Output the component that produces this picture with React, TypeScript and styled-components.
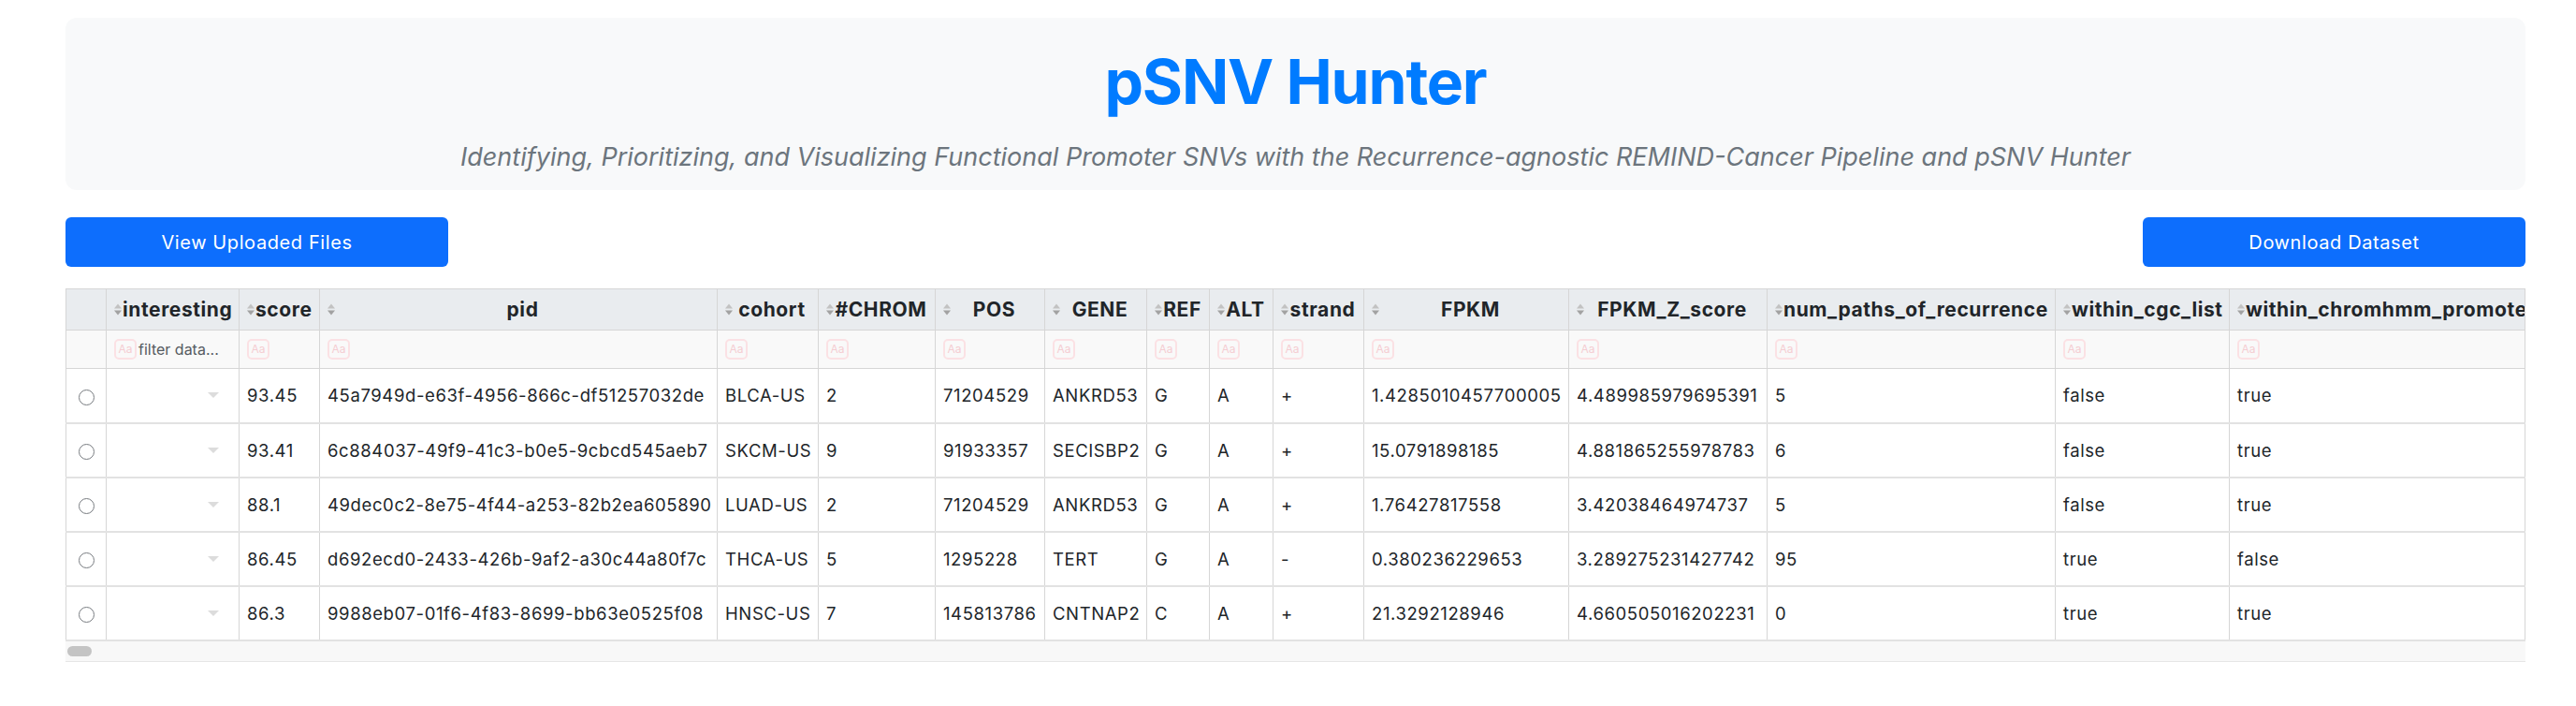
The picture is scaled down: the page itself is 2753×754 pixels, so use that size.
import React from "react";
import styled, { createGlobalStyle } from "styled-components";

const GlobalStyle = createGlobalStyle`
  html, body { margin: 0; padding: 0; background: #ffffff; }
  body { font-family: Inter, "Noto Sans", sans-serif; color: #212529; }
  * { box-sizing: border-box; }
`;

const Page = styled.div`
  padding: 19px 54px 40px 70px;
`;

const Hero = styled.header`
  background: #f8f9fa;
  border-radius: 12px;
  padding: 29px 24px 15px;
  text-align: center;
`;

const Title = styled.h1`
  margin: 0;
  font-size: 66px;
  line-height: 79px;
  font-weight: 700;
  letter-spacing: -1.2px;
  color: #007bff;
`;

const Subtitle = styled.p`
  margin: 21px 0 0;
  font-size: 27px;
  line-height: 40px;
  font-style: italic;
  color: #6c757d;
`;

const Actions = styled.div`
  display: flex;
  justify-content: space-between;
  margin-top: 29px;
`;

const Button = styled.button`
  width: 409px;
  height: 53px;
  border: 0;
  border-radius: 6px;
  background: #0d6efd;
  color: #ffffff;
  font-family: inherit;
  font-size: 20px;
  letter-spacing: 0.6px;
  font-weight: 400;
  cursor: pointer;
`;

const TableFrame = styled.div`
  margin-top: 23px;
  overflow: hidden;
`;

const Table = styled.table<{ $width: number }>`
  border-collapse: collapse;
  table-layout: fixed;
  width: ${(p) => p.$width}px;
`;

const HeadCell = styled.th`
  height: 44px;
  padding: 0 8px;
  background: #e9ecef;
  border: 1px solid #d6d6d6;
  font-weight: 700;
  font-size: 21px;
  letter-spacing: 0.6px;
  color: #212529;
  white-space: nowrap;
  overflow: hidden;
`;

const HeadInner = styled.div`
  display: flex;
  align-items: center;
`;

const HeadName = styled.span`
  flex: 1;
  text-align: center;
`;

const SortIcon = styled.svg`
  flex: none;
  width: 8px;
  height: 13px;
  margin-right: 1px;
`;

const FilterCell = styled.td`
  height: 41px;
  padding: 0 8px;
  background: #f9f9f9;
  border: 1px solid #d6d6d6;
  white-space: nowrap;
  overflow: hidden;
`;

const FilterInner = styled.div`
  display: flex;
  align-items: center;
  gap: 2px;
`;

const CaseBadge = styled.span`
  display: inline-flex;
  align-items: center;
  justify-content: center;
  width: 24px;
  height: 22px;
  border: 2px solid #fbe1e4;
  border-radius: 5px;
  font-size: 12px;
  color: #f5cdd2;
  line-height: 1;
`;

const Placeholder = styled.span`
  font-size: 16px;
  color: #555b61;
`;

const Row = styled.tr`
  height: 58px;
`;

const Cell = styled.td`
  padding: 0 8px;
  border: 1px solid #d6d6d6;
  border-bottom: 2px solid #e2e2e2;
  font-size: 18.5px;
  letter-spacing: 0.6px;
  color: #212529;
  white-space: nowrap;
  overflow: hidden;
  background: #ffffff;
`;

const CenterCell = styled(Cell)`
  text-align: center;
`;

const Radio = styled.span`
  display: inline-block;
  width: 17px;
  height: 17px;
  border: 1px solid #777b80;
  border-radius: 50%;
  background: #ffffff;
  vertical-align: middle;
`;

const DropdownCell = styled(Cell)`
  padding-right: 21px;
`;

const Caret = styled.div`
  display: flex;
  justify-content: flex-end;
  &::after {
    content: "";
    width: 0;
    height: 0;
    border-left: 6px solid transparent;
    border-right: 6px solid transparent;
    border-top: 6px solid #dcdcdc;
  }
`;

const ScrollTrack = styled.div`
  height: 22px;
  background: #f8f8f8;
  border-bottom: 1px solid #e6e6e6;
  display: flex;
  align-items: center;
  padding-left: 2px;
`;

const ScrollThumb = styled.div`
  width: 26px;
  height: 11px;
  border-radius: 6px;
  background: #c4c4c4;
`;

type Col = { key: string; label: string; width: number };

const columns: Col[] = [
  { key: "interesting", label: "interesting", width: 142 },
  { key: "score", label: "score", width: 86 },
  { key: "pid", label: "pid", width: 425 },
  { key: "cohort", label: "cohort", width: 108 },
  { key: "chrom", label: "#CHROM", width: 125 },
  { key: "pos", label: "POS", width: 117 },
  { key: "gene", label: "GENE", width: 109 },
  { key: "ref", label: "REF", width: 67 },
  { key: "alt", label: "ALT", width: 68 },
  { key: "strand", label: "strand", width: 97 },
  { key: "fpkm", label: "FPKM", width: 219 },
  { key: "fpkmz", label: "FPKM_Z_score", width: 212 },
  { key: "paths", label: "num_paths_of_recurrence", width: 308 },
  { key: "cgc", label: "within_cgc_list", width: 186 },
  { key: "chromhmm", label: "within_chromhmm_promoter", width: 316 },
];

const SELECT_WIDTH = 43;

const rows: string[][] = [
  ["93.45", "45a7949d-e63f-4956-866c-df51257032de", "BLCA-US", "2", "71204529", "ANKRD53", "G", "A", "+", "1.4285010457700005", "4.489985979695391", "5", "false", "true"],
  ["93.41", "6c884037-49f9-41c3-b0e5-9cbcd545aeb7", "SKCM-US", "9", "91933357", "SECISBP2", "G", "A", "+", "15.0791898185", "4.881865255978783", "6", "false", "true"],
  ["88.1", "49dec0c2-8e75-4f44-a253-82b2ea605890", "LUAD-US", "2", "71204529", "ANKRD53", "G", "A", "+", "1.76427817558", "3.42038464974737", "5", "false", "true"],
  ["86.45", "d692ecd0-2433-426b-9af2-a30c44a80f7c", "THCA-US", "5", "1295228", "TERT", "G", "A", "-", "0.380236229653", "3.289275231427742", "95", "true", "false"],
  ["86.3", "9988eb07-01f6-4f83-8699-bb63e0525f08", "HNSC-US", "7", "145813786", "CNTNAP2", "C", "A", "+", "21.3292128946", "4.660505016202231", "0", "true", "true"],
];

const Sort = () => (
  <SortIcon viewBox="0 0 8 13">
    <polygon points="0,5.5 4,0.5 8,5.5" fill="#c2c2c2" />
    <polygon points="0,7.5 8,7.5 4,12.5" fill="#a2a2a2" />
  </SortIcon>
);

const tableWidth = SELECT_WIDTH + columns.reduce((s, c) => s + c.width, 0);

export default function App() {
  return (
    <>
      <GlobalStyle />
      <Page>
        <Hero>
          <Title>pSNV Hunter</Title>
          <Subtitle>
            Identifying, Prioritizing, and Visualizing Functional Promoter SNVs with the
            Recurrence-agnostic REMIND-Cancer Pipeline and pSNV Hunter
          </Subtitle>
        </Hero>
        <Actions>
          <Button>View Uploaded Files</Button>
          <Button>Download Dataset</Button>
        </Actions>
        <TableFrame>
          <Table $width={tableWidth}>
            <colgroup>
              <col style={{ width: SELECT_WIDTH }} />
              {columns.map((c) => (
                <col key={c.key} style={{ width: c.width }} />
              ))}
            </colgroup>
            <thead>
              <tr>
                <HeadCell />
                {columns.map((c) => (
                  <HeadCell key={c.key}>
                    <HeadInner>
                      <Sort />
                      <HeadName>{c.label}</HeadName>
                    </HeadInner>
                  </HeadCell>
                ))}
              </tr>
              <tr>
                <FilterCell />
                {columns.map((c, i) => (
                  <FilterCell key={c.key}>
                    <FilterInner>
                      <CaseBadge>Aa</CaseBadge>
                      {i === 0 && <Placeholder>filter data...</Placeholder>}
                    </FilterInner>
                  </FilterCell>
                ))}
              </tr>
            </thead>
            <tbody>
              {rows.map((r, ri) => (
                <Row key={ri}>
                  <CenterCell>
                    <Radio />
                  </CenterCell>
                  <DropdownCell>
                    <Caret />
                  </DropdownCell>
                  {r.map((v, vi) => (
                    <Cell key={vi}>{v}</Cell>
                  ))}
                </Row>
              ))}
            </tbody>
          </Table>
          <ScrollTrack>
            <ScrollThumb />
          </ScrollTrack>
        </TableFrame>
      </Page>
    </>
  );
}
